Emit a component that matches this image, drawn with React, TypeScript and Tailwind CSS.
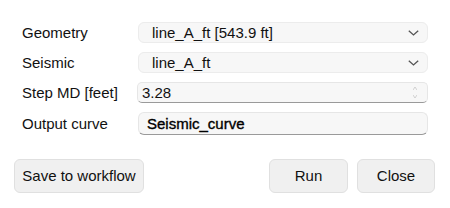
import React from "react";

const Chevron = () => (
  <svg width="11" height="6" viewBox="0 0 11 6" className="shrink-0">
    <path d="M0.8 0.8 L5.5 5 L10.2 0.8" fill="none" stroke="#555" strokeWidth="1.3" />
  </svg>
);

export default function App() {
  const font = { fontFamily: '"Liberation Sans", Arial, sans-serif' };
  return (
    <div className="w-[450px] h-[208px] bg-white text-[15px] text-[#111]" style={font}>
      <div className="pt-[22px] pl-[22px] pr-[22px] flex flex-col gap-[9px]">
        <div className="flex items-center">
          <div className="w-[116px] leading-[21px]">Geometry</div>
          <div className="w-[290px] h-[21px] rounded-[6px] bg-[#f7f7f7] border border-[#ececec] flex items-center pl-[13px] pr-[8px]">
            <span className="flex-1 leading-none">line_A_ft [543.9 ft]</span>
            <Chevron />
          </div>
        </div>
        <div className="flex items-center">
          <div className="w-[116px] leading-[21px]">Seismic</div>
          <div className="w-[290px] h-[21px] rounded-[6px] bg-[#f7f7f7] border border-[#ececec] flex items-center pl-[13px] pr-[8px]">
            <span className="flex-1 leading-none">line_A_ft</span>
            <Chevron />
          </div>
        </div>
        <div className="flex items-center">
          <div className="w-[115px] leading-[21px]">Step MD [feet]</div>
          <div className="w-[291px] h-[21px] rounded-[5px] bg-[#f7f7f7] border border-[#e6e6e6] border-b-[#9a9a9a] flex items-center pl-[4px] pr-[10px]">
            <span className="flex-1 leading-none">3.28</span>
            <div className="flex flex-col items-center gap-[5px]">
              <svg width="4" height="3" viewBox="0 0 4 3"><path d="M0 3 L2 0 L4 3" fill="none" stroke="#c8c8c8" strokeWidth="0.8" /></svg>
              <svg width="4" height="3" viewBox="0 0 4 3"><path d="M0 0 L2 3 L4 0" fill="none" stroke="#c8c8c8" strokeWidth="0.8" /></svg>
            </div>
          </div>
        </div>
        <div className="flex items-center">
          <div className="w-[116px] leading-[23px]">Output curve</div>
          <div className="w-[290px] h-[23px] rounded-[6px] bg-[#f7f7f7] border border-[#e6e6e6] border-b-[#9a9a9a] flex items-center pl-[8px]">
            <span className="leading-none text-black [-webkit-text-stroke:0.35px_black]">Seismic_curve</span>
          </div>
        </div>
      </div>
      <div className="mt-[24px] pl-[14px] pr-[15px] flex items-center">
        <button className="w-[130px] h-[34px] rounded-[6px] bg-[#f0f0f0] border border-[#e0e0e0]">Save to workflow</button>
        <div className="flex-1" />
        <div className="flex gap-[9px]">
          <button className="w-[79px] h-[34px] rounded-[6px] bg-[#f0f0f0] border border-[#e0e0e0]">Run</button>
          <button className="w-[78px] h-[34px] rounded-[6px] bg-[#f0f0f0] border border-[#e0e0e0]">Close</button>
        </div>
      </div>
    </div>
  );
}
